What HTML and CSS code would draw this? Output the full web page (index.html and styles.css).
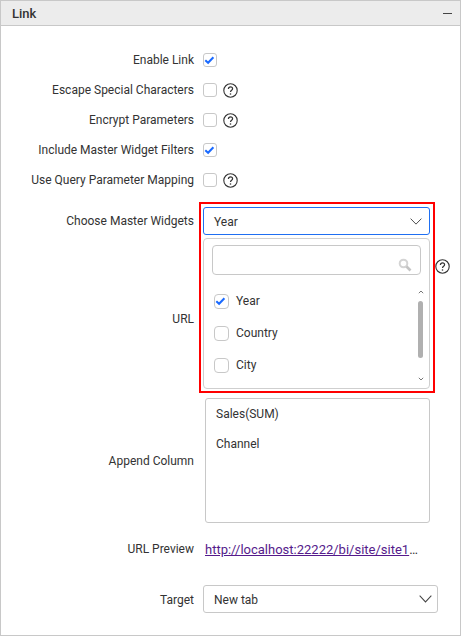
FILE: index.html
```html
<!DOCTYPE html>
<html lang="en">
<head>
    <meta charset="UTF-8">
    <title>Link</title>
    <link rel="stylesheet" href="styles.css">
</head>
<body>

<svg class="defs">
    <symbol id="tick" viewBox="0 0 14 14">
        <path d="M2.300 7.200l2.800 2.600 5.300-5.600" fill="none" stroke="#1a6aff" stroke-width="2"/>
    </symbol>
    <symbol id="help" viewBox="0 0 15 15">
        <circle cx="7.5" cy="7.5" r="6.7" fill="none" stroke="#333" stroke-width="1.1"/>
        <path d="M5.4 6c0-1.300.9-2.100 2.100-2.100s2.100.8 2.100 1.900c0 1.500-2.100 1.500-2.100 3.200" fill="none" stroke="#333" stroke-width="1.200"/>
        <circle cx="7.500" cy="11" r=".8" fill="#333"/>
    </symbol>
    <symbol id="chevron" viewBox="0 0 14 8" preserveAspectRatio="none">
        <path d="M.7.7L7 7l6.300-6.300" fill="none" stroke="#444" stroke-width="1.100"/>
    </symbol>
</svg>

<div class="panel">
    <header class="panel-head">
        <span class="panel-title">Link</span>
        <span class="collapse"></span>
    </header>

    <main class="form">
        <div class="row">
            <label class="label">Enable Link</label>
            <span class="check"><svg><use href="#tick"/></svg></span>
        </div>
        <div class="row">
            <label class="label">Escape Special Characters</label>
            <span class="check"></span>
            <svg class="help"><use href="#help"/></svg>
        </div>
        <div class="row">
            <label class="label">Encrypt Parameters</label>
            <span class="check"></span>
            <svg class="help"><use href="#help"/></svg>
        </div>
        <div class="row">
            <label class="label">Include Master Widget Filters</label>
            <span class="check"><svg><use href="#tick"/></svg></span>
        </div>
        <div class="row">
            <label class="label">Use Query Parameter Mapping</label>
            <span class="check"></span>
            <svg class="help"><use href="#help"/></svg>
        </div>

        <div class="row row-master">
            <label class="label">Choose Master Widgets</label>
            <div class="select select-open">
                <span>Year</span>
                <svg class="chevron"><use href="#chevron"/></svg>
            </div>
        </div>

        <div class="row row-url">
            <label class="label">URL</label>
            <div class="popup">
                <div class="search">
                    <svg class="search-icon" viewBox="0 0 14 14">
                        <circle cx="5.500" cy="5.500" r="3.800" fill="none" stroke="#d4d4d4" stroke-width="2"/>
                        <path d="M8.500 8.500l4 4" stroke="#c4c4c4" stroke-width="2.600"/>
                    </svg>
                </div>
                <div class="list">
                    <div class="option"><span class="check"><svg><use href="#tick"/></svg></span>Year</div>
                    <div class="option"><span class="check"></span>Country</div>
                    <div class="option"><span class="check"></span>City</div>
                </div>
                <div class="scrollbar">
                    <svg class="arrow" viewBox="0 0 6 4"><path d="M.8 3.200L3 1l2.200 2.200" fill="none" stroke="#777"/></svg>
                    <span class="thumb"></span>
                    <svg class="arrow arrow-down" viewBox="0 0 6 4"><path d="M.8.8L3 3 5.200.8" fill="none" stroke="#777"/></svg>
                </div>
            </div>
            <svg class="help help-url"><use href="#help"/></svg>
        </div>

        <div class="row row-append">
            <label class="label">Append Column</label>
            <div class="columns">
                <div class="column">Sales(SUM)</div>
                <div class="column">Channel</div>
            </div>
        </div>

        <div class="row row-preview">
            <label class="label">URL Preview</label>
            <div class="preview"><a href="#">http://localhost:22222/bi/site/site1</a>…</div>
        </div>

        <div class="row row-target">
            <label class="label">Target</label>
            <div class="select select-target">
                <span>New tab</span>
                <svg class="chevron"><use href="#chevron"/></svg>
            </div>
        </div>

        <div class="highlight"></div>
    </main>
</div>

</body>
</html>
```

FILE: styles.css
```css
html, body {
    margin: 0;
    padding: 0;
}
body {
    font-family: Roboto, "Liberation Sans", sans-serif;
    font-size: 12px;
    color: #333;
    background: #fff;
}
* {
    box-sizing: border-box;
}
.defs {
    display: none;
}
.panel {
    width: 461px;
    height: 636px;
    border: 1px solid #c8c8c8;
}
.panel-head {
    height: 25px;
    padding: 0 8px 0 11px;
    display: flex;
    align-items: center;
    justify-content: space-between;
    background: #ececec;
    border-bottom: 1px solid #c8c8c8;
}
.panel-title {
    font-weight: 500;
    font-size: 13px;
}
.collapse {
    width: 9px;
    height: 1px;
    background: #444;
}
.form {
    position: relative;
    padding-top: 19px;
}
.row {
    display: flex;
    align-items: center;
    height: 30px;
}
.label {
    width: 193px;
    margin-right: 9px;
    text-align: right;
    flex: none;
}
.check {
    display: inline-block;
    width: 14px;
    height: 14px;
    flex: none;
    border: 1px solid #c8c8c8;
    border-radius: 3px;
    background: #fff;
    position: relative;
}
.check svg {
    position: absolute;
    left: -1px;
    top: -1px;
    width: 14px;
    height: 14px;
}
.help {
    width: 15px;
    height: 15px;
    margin-left: 6px;
    flex: none;
}
.row-master {
    height: 28px;
    margin-top: 12px;
}
.select {
    height: 100%;
    display: flex;
    align-items: center;
    justify-content: space-between;
    border: 1px solid #c8c8c8;
    border-radius: 3px;
    padding: 0 7px 0 10px;
}
.select span {
    padding-top: 2px;
}
.select-open {
    width: 227px;
    border-color: #1f6ff2;
}
.chevron {
    width: 12px;
    height: 7px;
}
.row-url {
    height: 151px;
    margin-top: 3px;
}
.row-url .label {
    padding-top: 11px;
}
.popup {
    position: relative;
    width: 227px;
    height: 151px;
    padding: 6px 8px;
    border: 1px solid #cfcfcf;
    border-radius: 4px;
}
.search {
    position: relative;
    height: 30px;
    border: 1px solid #c8c8c8;
    border-radius: 4px;
}
.search-icon {
    position: absolute;
    right: 8px;
    top: 12px;
    width: 14px;
    height: 14px;
}
.list {
    padding-top: 10px;
}
.option {
    display: flex;
    align-items: center;
    gap: 7px;
    height: 32px;
    padding-left: 2px;
}
.option .check {
    width: 15px;
    height: 15px;
    border-radius: 4px;
}
.scrollbar {
    position: absolute;
    right: 6px;
    top: 51px;
    width: 5px;
    display: flex;
    flex-direction: column;
    align-items: center;
}
.arrow {
    width: 6px;
    height: 4px;
    flex: none;
}
.arrow-down {
    margin-top: 19px;
}
.thumb {
    width: 5px;
    height: 57px;
    margin-top: 7px;
    background: #b0b0b0;
    border-radius: 3px;
}
.help-url {
    align-self: flex-start;
    margin: 21px 0 0 5px;
}
.row-append {
    height: 125px;
    margin-top: 9px;
}
.columns {
    width: 225px;
    height: 125px;
    margin-left: 2px;
    padding: 0 10px;
    border: 1px solid #c8c8c8;
    border-radius: 3px;
}
.column {
    height: 30px;
    line-height: 30px;
}
.row-preview {
    height: 20px;
    margin-top: 16px;
}
.preview {
    margin-left: 2px;
    white-space: nowrap;
    font-size: 13px;
}
.preview a {
    color: #551a8b;
}
.row-target {
    height: 28px;
    margin-top: 26px;
}
.row-target .label {
    padding-top: 2px;
}
.select-target {
    width: 235px;
    padding-right: 5px;
}
.select-target .chevron {
    width: 13px;
    height: 8px;
}
.highlight {
    position: absolute;
    left: 198px;
    top: 176px;
    width: 236px;
    height: 191px;
    border: 2px solid #f00;
    pointer-events: none;
}
```
